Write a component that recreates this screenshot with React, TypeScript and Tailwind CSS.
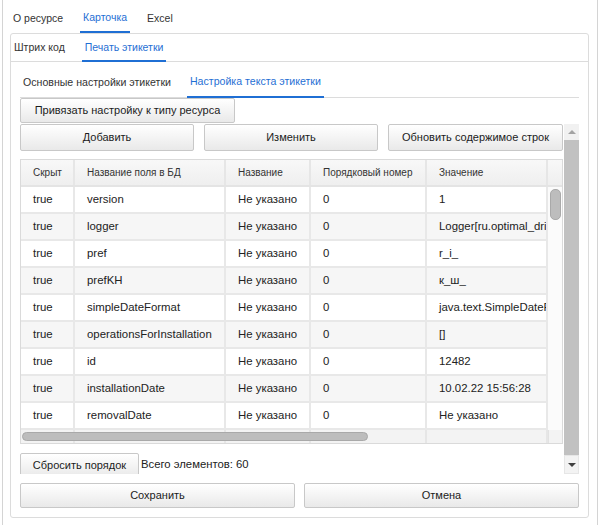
import React from "react";

type BtnProps = { children: React.ReactNode; className?: string };

function Btn({ children, className = "" }: BtnProps) {
  return (
    <div
      className={
        "flex shrink-0 items-center justify-center overflow-hidden whitespace-nowrap rounded-[2px] border border-[#c8c8c8] bg-linear-to-b from-white to-[#e9e9e9] text-[11px] text-[#1c1c1c] " +
        className
      }
    >
      {children}
    </div>
  );
}

const rows: [string, string, string, string, string][] = [
  ["true", "version", "Не указано", "0", "1"],
  ["true", "logger", "Не указано", "0", "Logger[ru.optimal_drive.core.Resource]"],
  ["true", "pref", "Не указано", "0", "r_i_"],
  ["true", "prefKH", "Не указано", "0", "к_ш_"],
  ["true", "simpleDateFormat", "Не указано", "0", "java.text.SimpleDateFormat@4f76f1a0"],
  ["true", "operationsForInstallation", "Не указано", "0", "[]"],
  ["true", "id", "Не указано", "0", "12482"],
  ["true", "installationDate", "Не указано", "0", "10.02.22 15:56:28"],
  ["true", "removalDate", "Не указано", "0", "Не указано"],
];

const widths = ["w-[54px]", "w-[151px]", "w-[85px]", "w-[116px]", "w-[121px]"];

export default function App() {
  return (
    <div className="h-[525px] w-[602px] overflow-hidden bg-white font-['Liberation_Sans',Arial,sans-serif] text-[#333]">
      <div className="ml-[2px] h-full w-[596px] border-x border-[#d4d4d4] pl-[7px]">
        {/* top tabs */}
        <div className="flex h-[33px] gap-[14px] text-[10.5px]">
          <div className="flex h-full items-center px-[3px] pt-[4px] text-[#333]">О ресурсе</div>
          <div className="flex h-full items-center border-b-2 border-[#1f6fd4] px-[3px] pt-[4px] text-[#1f6fd4]">
            Карточка
          </div>
          <div className="flex h-full items-center px-[3px] pt-[4px] text-[#333]">Excel</div>
        </div>

        {/* panel */}
        <div className="flex w-[579px] flex-col rounded-[3px] border border-[#dcdcdc] pb-[9px]">
          <div className="flex h-[28px] gap-[14px] border-b border-[#dcdcdc] text-[10.5px]">
            <div className="flex h-full items-center px-[3px] pt-[1px] text-[#333]">Штрих код</div>
            <div className="mb-[-1px] flex h-[28px] items-center border-b-2 border-[#1f6fd4] px-[3px] pt-[1px] text-[#1f6fd4]">
              Печать этикетки
            </div>
          </div>

          <div className="flex flex-col px-[9px] pt-[6px]">
            <div className="flex h-[30px] gap-[13px] border-b border-[#dcdcdc] text-[10.6px]">
              <div className="flex h-full items-center px-[3px] text-[#333]">Основные настройки этикетки</div>
              <div className="mb-[-1px] flex h-[30px] items-center border-b-2 border-[#1f6fd4] px-[3px] text-[#1f6fd4]">
                Настройка текста этикетки
              </div>
            </div>

            <Btn className="h-[25px] w-[215px]">Привязать настройку к типу ресурса</Btn>

            {/* scroll area */}
            <div className="mt-[1px] flex h-[350px]">
              <div className="flex w-[543px] flex-col overflow-hidden">
                <div className="flex h-[27px] shrink-0 gap-[10px]">
                  <Btn className="h-[27px] w-[174px]">Добавить</Btn>
                  <Btn className="h-[27px] w-[174px]">Изменить</Btn>
                  <Btn className="h-[27px] w-[175px]">Обновить содержимое строк</Btn>
                </div>

                {/* table */}
                <div className="mt-[8px] flex shrink-0 border border-[#dadada] bg-white">
                  <div className="flex w-[527px] flex-col">
                    <div className="flex h-[27px] border-b-2 border-[#e4e4e4] bg-linear-to-b from-[#f8f8f8] to-[#efefef] text-[10px] text-[#333]">
                      {["Скрыт", "Название поля в БД", "Название", "Порядковый номер", "Значение"].map((h, i) => (
                        <div
                          key={h}
                          className={
                            widths[i] +
                            " flex h-full items-center overflow-hidden whitespace-nowrap border-r-2 border-[#e6e6e6] pl-[12px]"
                          }
                        >
                          {h}
                        </div>
                      ))}
                    </div>
                    {rows.map((r, ri) => (
                      <div
                        key={ri}
                        className={
                          "flex h-[27px] border-b-2 border-[#e8e8e8] text-[11.4px] text-[#222] " +
                          (ri % 2 === 1 ? "bg-[#f6f6f6]" : "bg-white")
                        }
                      >
                        {r.map((c, ci) => (
                          <div
                            key={ci}
                            className={
                              widths[ci] +
                              " flex h-full items-center overflow-hidden whitespace-nowrap border-r-2 border-[#e8e8e8] pl-[12px]"
                            }
                          >
                            {c}
                          </div>
                        ))}
                      </div>
                    ))}
                    <div className="relative flex h-[13px] bg-[#f3f3f3]">
                      {widths.map((w, i) => (
                        <div key={i} className={w + " h-full border-r-2 border-[#e6e6e6]"} />
                      ))}
                      <div className="absolute left-[1px] top-[2px] h-[9px] w-[346px] rounded-full border border-[#a9a9a9] bg-[#bdbdbd]" />
                    </div>
                  </div>
                  <div className="flex w-[14px] flex-col">
                    <div className="h-[27px] border-b-2 border-[#e4e4e4] bg-linear-to-b from-[#f8f8f8] to-[#efefef]" />
                    <div className="flex h-[243px] flex-col items-center bg-[#fbfbfb]">
                      <div className="mt-[2px] h-[31px] w-[11px] rounded-[5px] border border-[#a9a9a9] bg-[#bdbdbd]" />
                    </div>
                    <div className="h-[13px] border-l border-[#e2e2e2] bg-[#f3f3f3]" />
                  </div>
                </div>

                <div className="mt-[9px] flex shrink-0 items-start">
                  <Btn className="h-[25px] w-[119px] px-[6px]">Сбросить порядок</Btn>
                  <div className="ml-[2px] mt-[3px] text-[11.3px] text-[#222]">Всего элементов: 60</div>
                </div>
              </div>

              {/* vertical scrollbar */}
              <div className="ml-[1px] flex w-[15px] flex-col">
                <div className="flex h-[16px] items-center justify-center bg-[#f1f1f1]">
                  <div className="h-0 w-0 border-x-[4px] border-b-[4px] border-x-transparent border-b-[#a3a3a3]" />
                </div>
                <div className="flex-1 bg-[#c1c1c1]" />
                <div className="flex h-[19px] items-center justify-center border border-[#e6e6e6] bg-[#f3f3f3]">
                  <div className="h-0 w-0 border-x-[4px] border-t-[4px] border-x-transparent border-t-[#404040]" />
                </div>
              </div>
            </div>

            <div className="mt-[9px] flex gap-[9px]">
              <Btn className="h-[25px] w-[275px]">Сохранить</Btn>
              <Btn className="h-[25px] w-[275px]">Отмена</Btn>
            </div>
          </div>
        </div>
      </div>
    </div>
  );
}
